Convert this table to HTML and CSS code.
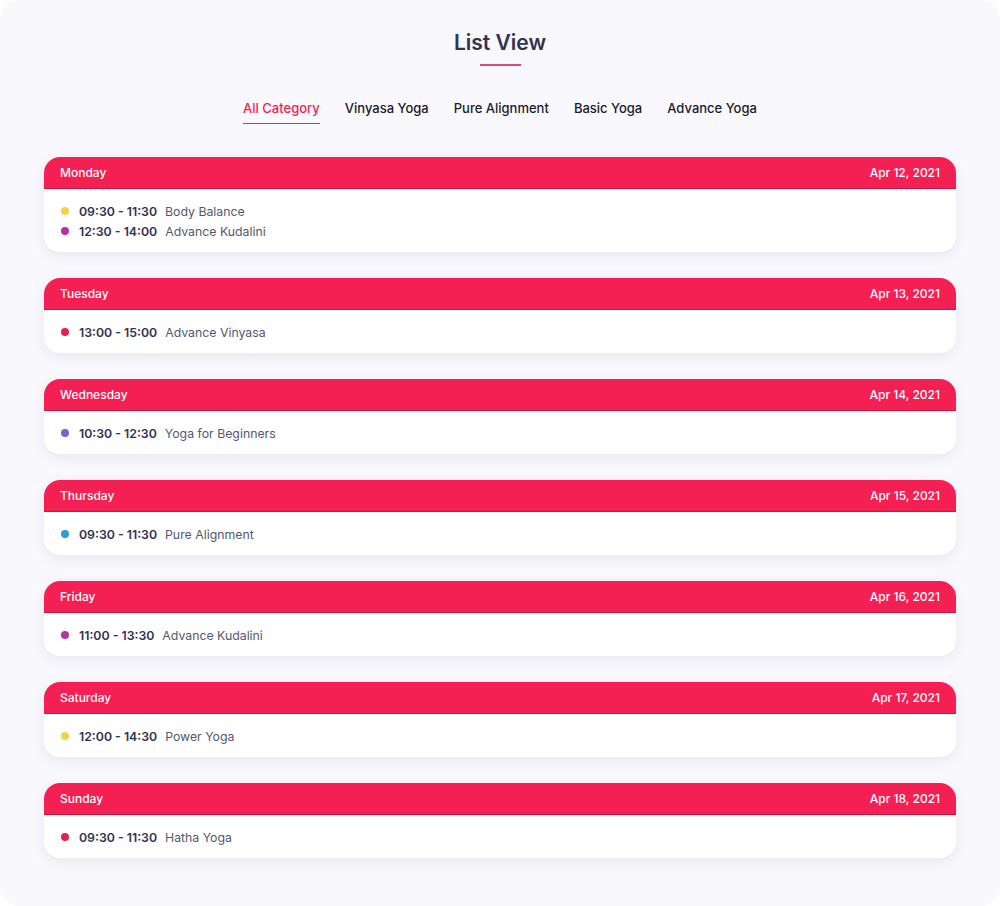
FILE: index.html
```html
<!DOCTYPE html>
<html lang="en">
<head>
    <meta charset="UTF-8">
    <meta name="viewport" content="width=device-width, initial-scale=1.0">
    <title>List View</title>
    <link rel="stylesheet" href="styles.css">
</head>
<body>
    <div class="page">
        <h1 class="heading">List View</h1>
        <nav class="tabs">
            <a class="tab active">All Category</a>
            <a class="tab">Vinyasa Yoga</a>
            <a class="tab">Pure Alignment</a>
            <a class="tab">Basic Yoga</a>
            <a class="tab">Advance Yoga</a>
        </nav>
        <div class="days">
            <div class="day">
                <div class="day-head"><span>Monday</span><span>Apr 12, 2021</span></div>
                <div class="day-body">
                    <div class="item"><i class="dot yellow"></i><b>09:30 - 11:30</b><span>Body Balance</span></div>
                    <div class="item"><i class="dot purple"></i><b>12:30 - 14:00</b><span>Advance Kudalini</span></div>
                </div>
            </div>
            <div class="day">
                <div class="day-head"><span>Tuesday</span><span>Apr 13, 2021</span></div>
                <div class="day-body">
                    <div class="item"><i class="dot red"></i><b>13:00 - 15:00</b><span>Advance Vinyasa</span></div>
                </div>
            </div>
            <div class="day">
                <div class="day-head"><span>Wednesday</span><span>Apr 14, 2021</span></div>
                <div class="day-body">
                    <div class="item"><i class="dot violet"></i><b>10:30 - 12:30</b><span>Yoga for Beginners</span></div>
                </div>
            </div>
            <div class="day">
                <div class="day-head"><span>Thursday</span><span>Apr 15, 2021</span></div>
                <div class="day-body">
                    <div class="item"><i class="dot blue"></i><b>09:30 - 11:30</b><span>Pure Alignment</span></div>
                </div>
            </div>
            <div class="day">
                <div class="day-head"><span>Friday</span><span>Apr 16, 2021</span></div>
                <div class="day-body">
                    <div class="item"><i class="dot purple"></i><b>11:00 - 13:30</b><span>Advance Kudalini</span></div>
                </div>
            </div>
            <div class="day">
                <div class="day-head"><span>Saturday</span><span>Apr 17, 2021</span></div>
                <div class="day-body">
                    <div class="item"><i class="dot yellow"></i><b>12:00 - 14:30</b><span>Power Yoga</span></div>
                </div>
            </div>
            <div class="day">
                <div class="day-head"><span>Sunday</span><span>Apr 18, 2021</span></div>
                <div class="day-body">
                    <div class="item"><i class="dot red"></i><b>09:30 - 11:30</b><span>Hatha Yoga</span></div>
                </div>
            </div>
        </div>
    </div>
</body>
</html>
```

FILE: styles.css
```css
body {
    margin: 0;
    background: #ffffff;
    font-family: Inter, "Open Sans", sans-serif;
    color: #32324d;
}
.page {
    width: 1000px;
    height: 906px;
    box-sizing: border-box;
    background: #f8f8fd;
    border-radius: 20px;
    padding: 30px 44px 0;
    overflow: hidden;
}
.heading {
    margin: 0;
    text-align: center;
    font-size: 21px;
    line-height: 26px;
    font-weight: 600;
    color: #33334f;
}
.heading::after {
    content: "";
    display: block;
    width: 41px;
    height: 2px;
    margin: 8px auto 0;
    background: #e24a78;
}
.tabs {
    display: flex;
    justify-content: center;
    gap: 25px;
    margin-top: 33px;
}
.tab {
    font-size: 13px;
    font-weight: 500;
    line-height: 18px;
    color: #1c1c28;
    padding-bottom: 6px;
    border-bottom: 1px solid transparent;
}
.tab.active {
    color: #f41f52;
    border-bottom-color: #f41f52;
}
.days {
    display: flex;
    flex-direction: column;
    gap: 26px;
    margin-top: 33px;
}
.day {
    background: #ffffff;
    border-radius: 16px;
    box-shadow: 0 4px 14px rgba(40, 40, 90, 0.08);
    overflow: hidden;
}
.day-head {
    display: flex;
    justify-content: space-between;
    height: 31px;
    align-items: center;
    padding: 0 16px;
    background: #f41f52;
    border-bottom: 1px solid #c8173f;
    color: #ffffff;
    font-size: 12px;
    font-weight: 500;
}
.day-body {
    padding: 12px 16px 11px;
}
.item {
    display: flex;
    align-items: center;
    height: 20px;
    font-size: 12.3px;
}
.item b {
    font-weight: 600;
    color: #33334f;
    margin-right: 8px;
}
.item span {
    color: #55576e;
}
.dot {
    width: 8px;
    height: 8px;
    border-radius: 50%;
    margin: 0 10px 0 1px;
}
.yellow { background: #f6d049; }
.purple { background: #b6339e; }
.red { background: #e3214f; }
.violet { background: #7163df; }
.blue { background: #279ddf; }
```
